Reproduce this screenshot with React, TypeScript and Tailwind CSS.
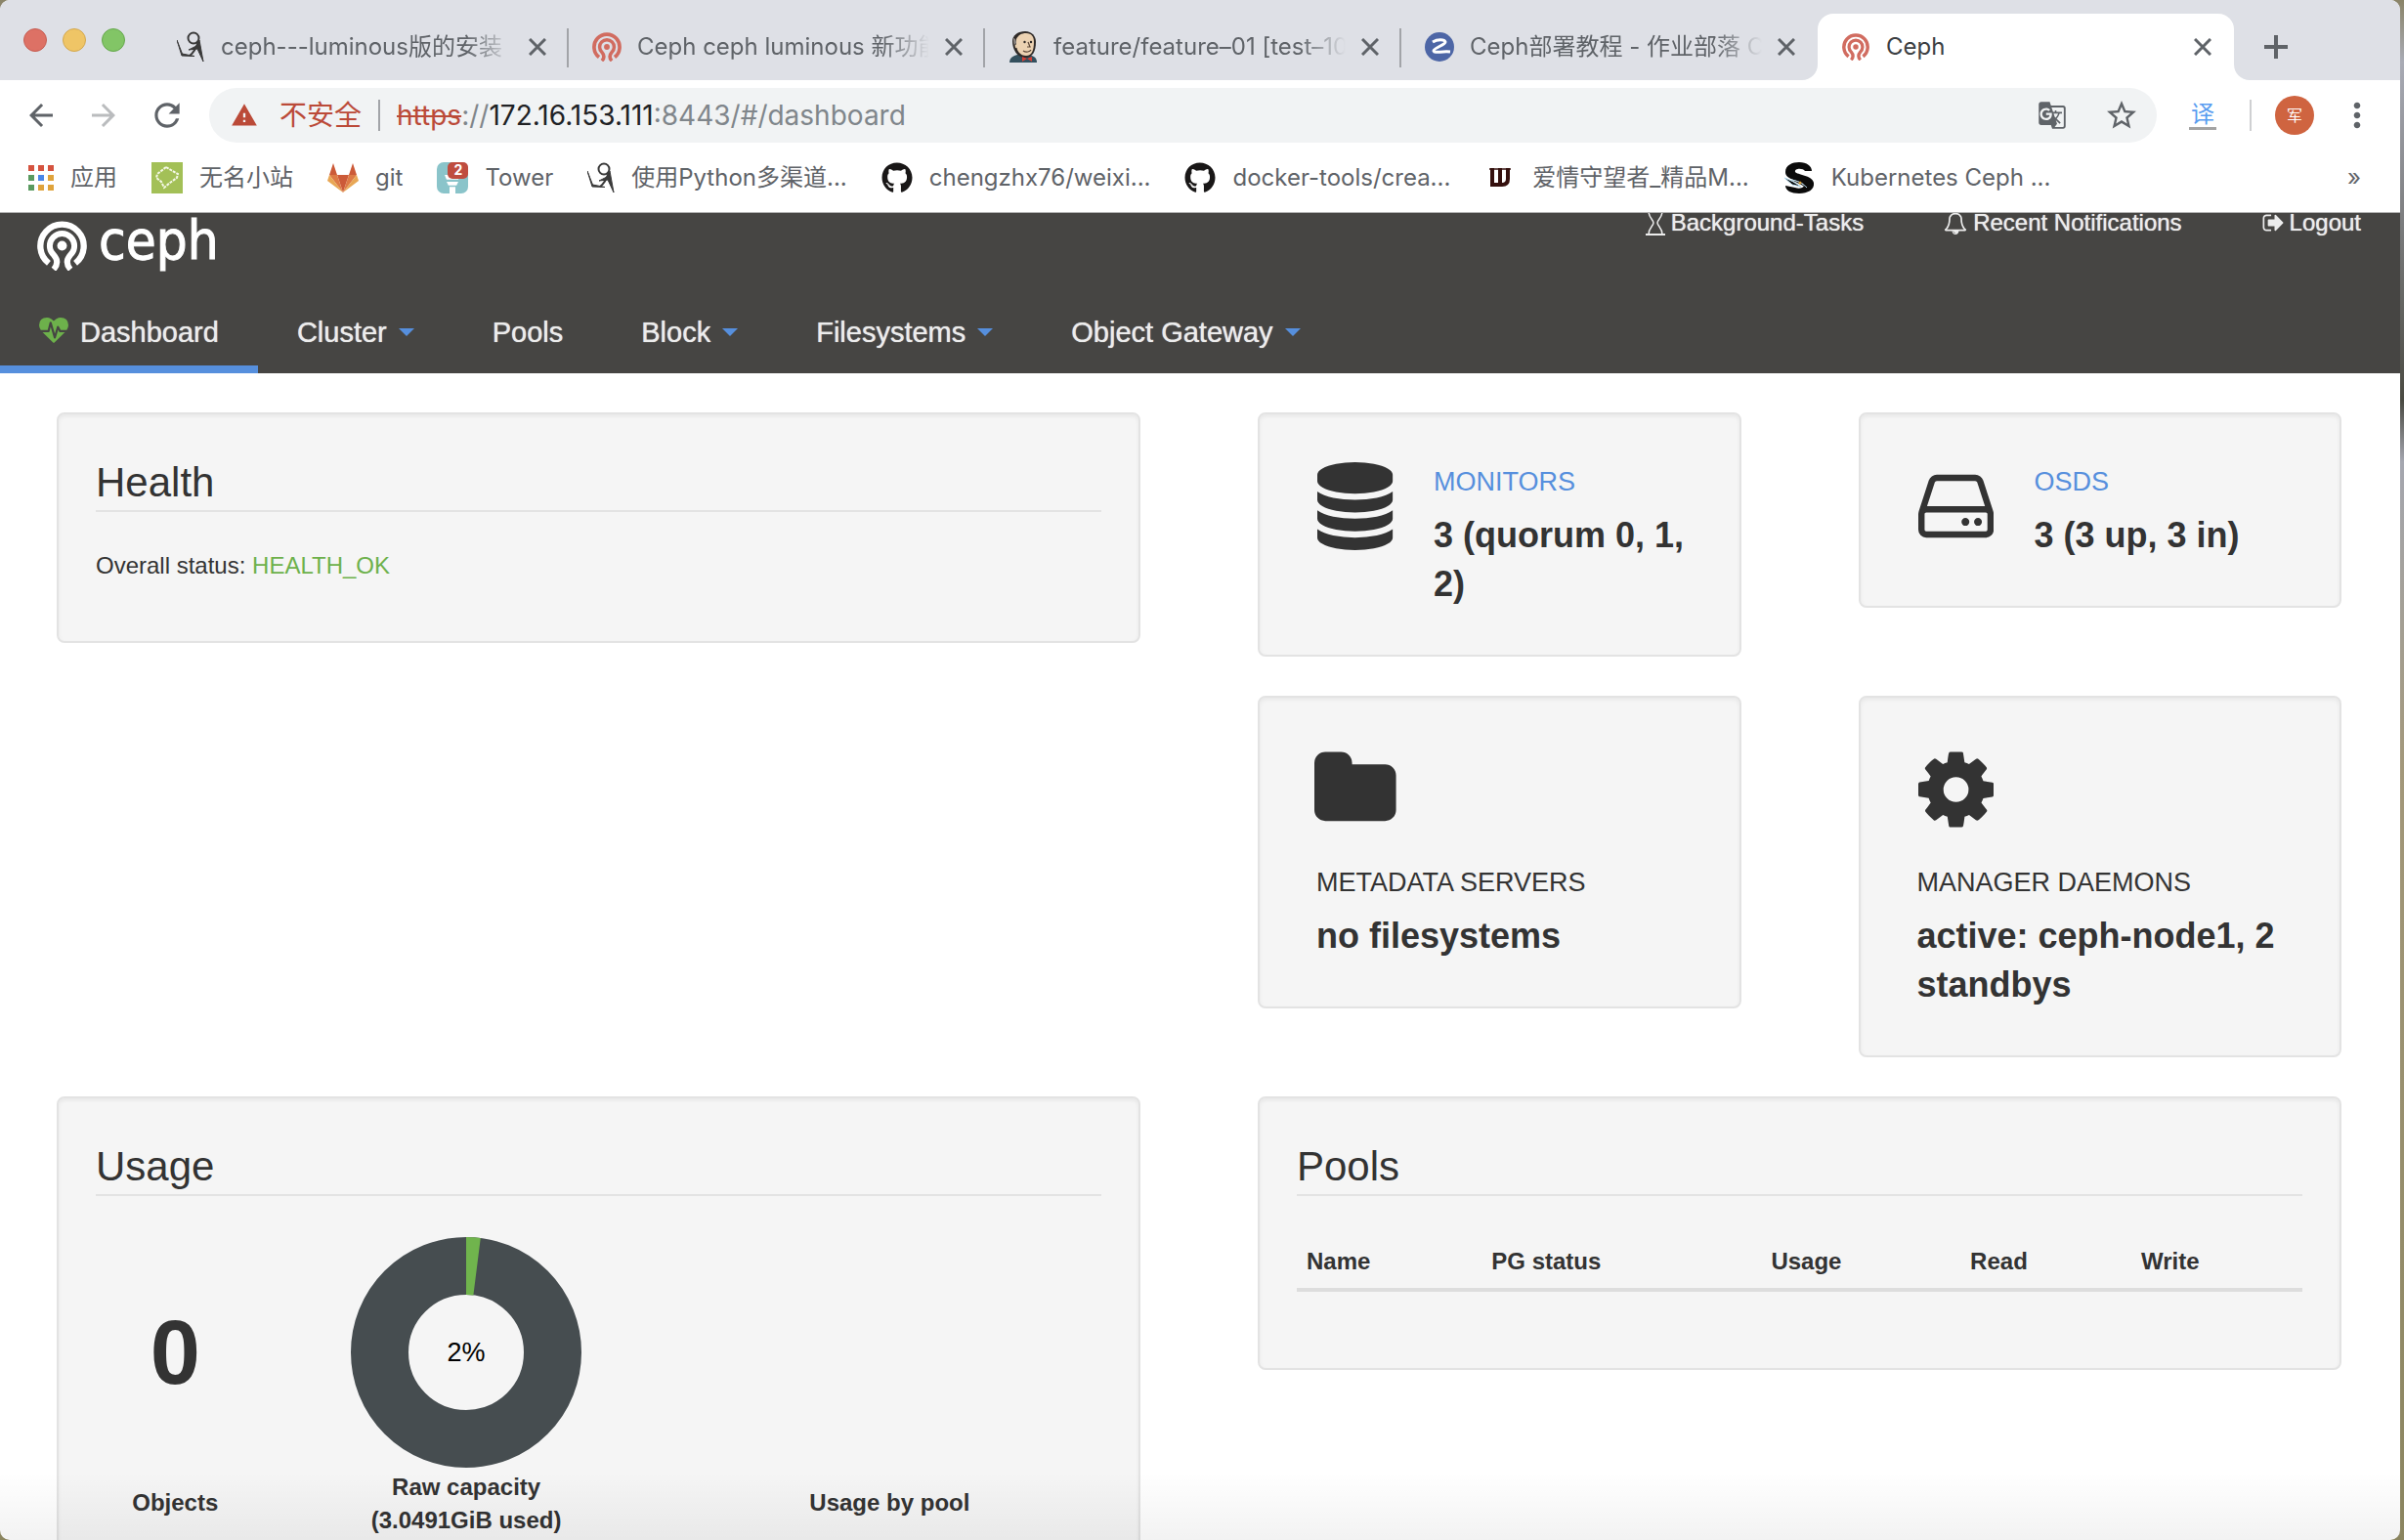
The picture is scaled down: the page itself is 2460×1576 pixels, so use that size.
import type { ReactNode } from "react";
import { FaGithub } from "react-icons/fa";
import {
  MdArrowBack,
  MdArrowForward,
  MdGTranslate,
  MdMoreVert,
  MdRefresh,
  MdStarBorder,
  MdWarning,
} from "react-icons/md";

/* ---------- Drawings ---------- */

function CephMark({ className }: { className: string }) {
  return (
    <svg viewBox="0 0 154 154" className={className} fill="none" stroke="currentColor" aria-hidden="true">
      <path d="M36 131A67 67 0 1 1 118 131" strokeWidth="19" />
      <path d="M51 150C64 136 64 120 51 105A38 38 0 1 1 103 105C90 120 90 136 103 150" strokeWidth="18" />
      <circle cx="77" cy="77" r="15" fill="currentColor" stroke="none" />
    </svg>
  );
}

function ArcherIcon() {
  return (
    <svg viewBox="0 0 28 32" className="h-8 w-7" fill="none" stroke="#3a3a3a" aria-hidden="true">
      <circle cx="17" cy="7" r="5.5" strokeWidth="2" />
      <path d="M0 9L5 25L18 25.500L5.500 23Z" fill="#3a3a3a" strokeWidth="1" />
      <path d="M13 25C17 22 20 17 22 10" strokeWidth="2" />
      <path d="M23 9L27 31L21 18L12 19L20 15Z" fill="#3a3a3a" strokeWidth="1" />
    </svg>
  );
}

function JenkinsIcon() {
  return (
    <svg viewBox="0 0 30 32" className="h-8 w-8" aria-hidden="true">
      <path d="M1 32C1 27 5 25 9 24H20C26 25 29 27 29 32Z" fill="#34505e" />
      <path d="M4 10C4 4 10 0 17 0C24 0 28 5 28 11C28 20 25 27 17 27C9 27 4 19 4 10Z" fill="#2f2a28" />
      <path d="M8 8C10 4 13 2 18 2C24 2 26 6 26 11C26 19 24 25 18 25C12 25 8 20 8 14Z" fill="#ecd2b2" />
      <path d="M5 7C7 7 8 9 8 13V17C6 16 5 12 5 7Z" fill="#8d8783" />
      <path d="M8 13C5 13 6 18 9 18" fill="#ecd2b2" stroke="#2f2a28" strokeWidth="1" />
      <circle cx="16.500" cy="11" r="1.200" fill="#2f2a28" />
      <circle cx="23" cy="11" r="1.200" fill="#2f2a28" />
      <path d="M20 11L22 16H19M15 20C18 22 22 21 23 19" fill="none" stroke="#5b4636" strokeWidth="1.200" />
      <path d="M14 26L19 28L14 31ZM24 26L19 28L24 31Z" fill="#d43f35" />
    </svg>
  );
}

function ZIcon() {
  return (
    <svg viewBox="0 0 30 30" className="h-[30px] w-[30px]" aria-hidden="true">
      <circle cx="15" cy="15" r="15" fill="#4d66a6" />
      <path d="M8 10C13 7 20 7 21 10C21 13 9 16 9 19C10 22 17 19 26 20" fill="none" stroke="#fff" strokeWidth="3" />
    </svg>
  );
}

function AppsIcon() {
  const rows = [
    ["#d5533f", "#d5533f", "#d5533f"],
    ["#5a9a5f", "#4a86e8", "#dfa33c"],
    ["#5a9a5f", "#dfa33c", "#dfa33c"],
  ];
  return (
    <svg viewBox="0 0 26 26" className="h-[26px] w-[26px]" aria-hidden="true">
      {rows.map((row, y) =>
        row.map((fill, x) => <rect key={`${x}-${y}`} x={x * 10} y={y * 10} width="6" height="6" fill={fill} />),
      )}
    </svg>
  );
}

function GreenSiteIcon() {
  return (
    <svg viewBox="0 0 32 32" className="h-8 w-8" aria-hidden="true">
      <rect width="32" height="32" fill="#a3c057" />
      <path
        d="M15 5L20 8L27 12L26 16L19 21L13 26L10 20L5 16L6 12Z"
        fill="none"
        stroke="#f4f8e6"
        strokeWidth="2"
        strokeDasharray="3 1"
      />
    </svg>
  );
}

function GitlabIcon() {
  return (
    <svg viewBox="0 0 32 30" className="h-[30px] w-8" aria-hidden="true">
      <path d="M16 30L10 12H22Z" fill="#cc5a38" />
      <path d="M16 30L2 12H10ZM16 30L30 12H22Z" fill="#dd7a45" />
      <path d="M2 12L0 18L16 30ZM30 12L32 18L16 30Z" fill="#e8a755" />
      <path d="M2 12L6 0L10 12ZM30 12L26 0L22 12Z" fill="#cc5a38" />
    </svg>
  );
}

function TowerIcon() {
  return (
    <span className="relative block h-8 w-8">
      <svg viewBox="0 0 32 32" className="h-8 w-8" aria-hidden="true">
        <rect width="32" height="32" rx="7" fill="#8ac4ca" />
        <path d="M8 13H24L22 18H10ZM10 20H22L20 24H12ZM13 24H19V32H13Z" fill="#fff" />
        <path d="M9 18.500H23M12 24.500H20" stroke="#8ac4ca" strokeWidth="1.500" />
      </svg>
      <span className="absolute right-0 top-0 flex h-[17px] w-[21px] items-center justify-center rounded-[5px] bg-[#bf4d40] text-[14px] font-bold leading-none text-white">
        2
      </span>
    </span>
  );
}

function WIcon() {
  return (
    <svg viewBox="0 0 32 32" className="h-8 w-8" fill="none" stroke="#35100e" aria-hidden="true">
      <path d="M8 6V23H18Q24 23 24 17V6" strokeWidth="4" />
      <path d="M16 6V23" strokeWidth="4" />
      <path d="M5 7H27" strokeWidth="1.500" />
    </svg>
  );
}

function SIcon() {
  return (
    <svg viewBox="0 0 32 32" className="h-8 w-8" aria-hidden="true">
      <path
        d="M29 9H22C20 6 11 6 12 10C14 13 29 13 31 21C32 28 25 32 16 32C8 32 2 29 2 24L12 26C18 28 23 25 20 22C15 18 2 18 2 10C2 3 9 0 16 0C24 0 29 4 29 9Z"
        fill="#0b0b0b"
      />
      <path d="M1 16C7 18 12 21 18 25L9 23ZM8 18C14 19 19 21 24 26" fill="#0b0b0b" stroke="#b8dcee" strokeWidth="1" />
      <circle cx="17" cy="21" r="1.500" fill="#d9a441" />
    </svg>
  );
}

/* Font icons drawn on a 1792-unit em */
const glyphs = {
  database: {
    box: "0 0 1536 1792",
    d: "M768 768q237 0 443-43t325-127v170q0 69-103 128t-280 93.5-385 34.5-385-34.5-280-93.5-103-128v-170q119 84 325 127t443 43zm0 768q237 0 443-43t325-127v170q0 69-103 128t-280 93.5-385 34.5-385-34.5-280-93.5-103-128v-170q119 84 325 127t443 43zm0-384q237 0 443-43t325-127v170q0 69-103 128t-280 93.5-385 34.5-385-34.5-280-93.5-103-128v-170q119 84 325 127t443 43zm0-1152q208 0 385 34.5t280 93.5 103 128v128q0 69-103 128t-280 93.5-385 34.5-385-34.5-280-93.5-103-128v-128q0-69 103-128t280-93.5 385-34.5z",
  },
  disk: {
    box: "0 0 1536 1792",
    d: "M1040 1216q0 33-23.5 56.5t-56.5 23.5-56.5-23.5-23.5-56.5 23.5-56.5 56.5-23.5 56.5 23.5 23.5 56.5zm256 0q0 33-23.5 56.5t-56.5 23.5-56.5-23.5-23.5-56.5 23.5-56.5 56.5-23.5 56.5 23.5 23.5 56.5zm112 160v-320q0-13-9.5-22.5t-22.5-9.5h-1216q-13 0-22.5 9.5t-9.5 22.5v320q0 13 9.5 22.5t22.5 9.5h1216q13 0 22.5-9.5t9.5-22.5zm-1230-480h1180l-157-482q-4-13-16-21.5t-26-8.5h-782q-14 0-26 8.5t-16 21.5zm1358 160v320q0 66-47 113t-113 47h-1216q-66 0-113-47t-47-113v-320q0-25 16-75l197-606q17-53 63-86t101-33h782q55 0 101 33t63 86l197 606q16 50 16 75z",
  },
  folder: {
    box: "0 0 1664 1792",
    d: "M1664 608v704q0 92-66 158t-158 66h-1216q-92 0-158-66t-66-158v-960q0-92 66-158t158-66h320q92 0 158 66t66 158v32h672q92 0 158 66t66 158z",
  },
  cog: {
    box: "0 0 1536 1792",
    d: "M1024 896q0-106-75-181t-181-75-181 75-75 181 75 181 181 75 181-75 75-181zm512-109v222q0 12-8 23t-20 13l-185 28q-19 54-39 91 35 50 107 138 10 12 10 25t-9 23q-27 37-99 108t-94 71q-12 0-26-9l-138-108q-44 23-91 38-16 136-29 186-7 28-36 28h-222q-14 0-24.5-8.5t-11.5-21.5l-28-184q-49-16-90-37l-141 107q-10 9-25 9-14 0-25-11-126-114-165-168-7-10-7-23 0-12 8-23 15-21 51-66.5t54-70.5q-27-50-41-99l-183-27q-13-2-21-12.5t-8-23.5v-222q0-12 8-23t19-13l186-28q14-46 39-92-40-57-107-138-10-12-10-24 0-10 9-23 26-36 98.5-107.5t94.5-71.5q13 0 26 10l138 107q44-23 91-38 16-136 29-186 7-28 36-28h222q14 0 24.5 8.5t11.5 21.5l28 184q49 16 90 37l142-107q9-9 24-9 13 0 25 10 129 119 165 170 7 8 7 22 0 12-8 23-15 21-51 66.5t-54 70.5q26 50 41 98l183 28q13 2 21 12.5t8 23.5z",
  },
  heartbeat: {
    box: "0 0 1792 1792",
    d: "M1280 896h305q-5 6-10 10.5t-9 7.5l-3 4-623 600q-18 18-44 18t-44-18l-624-602q-5-2-21-20h369q22 0 39.5-13.5t22.5-34.5l70-281 190 667q6 20 23 33t39 13q21 0 38-13t23-33l146-485 56 112q18 35 57 35zm512-428q0 145-103 300h-369l-111-221q-8-17-25.5-27t-36.5-8q-45 5-56 46l-129 430-196-686q-6-20-23.5-33t-39.5-13-39 13.5-22 34.5l-116 464h-423q-103-155-103-300 0-220 127-344t351-124q62 0 126.5 21.5t120 58 95.5 68.5 76 68q36-36 76-68t95.5-68.5 120-58 126.5-21.5q224 0 351 124t127 344z",
  },
  bell: {
    box: "0 0 1792 1792",
    d: "M912 1696q0-16-16-16-59 0-101.5-42.5t-42.5-101.5q0-16-16-16t-16 16q0 73 51.5 124.5t124.5 51.5q16 0 16-16zm-666-288h1300q-266-300-266-832 0-51-24-105t-69-103-121.5-80.5-169.5-31.5-169.5 31.5-121.5 80.5-69 103-24 105q0 532-266 832zm1482 0q0 52-38 90t-90 38h-448q0 106-75 181t-181 75-181-75-75-181h-448q-52 0-90-38t-38-90q50-42 91-88t85-119.5 74.5-158.5 50-206 19.5-260q0-152 117-282.5t307-158.5q-8-19-8-39 0-40 28-68t68-28 68 28 28 68q0 20-8 39 190 28 307 158.5t117 282.5q0 139 19.5 260t50 206 74.5 158.5 85 119.5 91 88z",
  },
  logout: {
    box: "0 0 1568 1792",
    d: "M640 1440q0 4 1 20t.5 26.5-3 23.5-10 19.5-20.5 6.5h-320q-119 0-203.5-84.5t-84.5-203.5v-704q0-119 84.5-203.5t203.5-84.5h320q13 0 22.5 9.5t9.5 22.5q0 4 1 20t.5 26.5-3 23.5-10 19.5-20.5 6.5h-320q-66 0-113 47t-47 113v704q0 66 47 113t113 47h312l11.5 1 11.5 3 8 5.5 7 9 2 13.5zm928-544q0 26-19 45l-544 544q-19 19-45 19t-45-19-19-45v-288h-448q-26 0-45-19t-19-45v-384q0-26 19-45t45-19h448v-288q0-26 19-45t45-19 45 19l544 544q19 19 19 45z",
  },
};

function Glyph({ name, className }: { name: keyof typeof glyphs; className: string }) {
  return (
    <svg viewBox={glyphs[name].box} className={className} fill="currentColor" aria-hidden="true">
      <path d={glyphs[name].d} />
    </svg>
  );
}

function HourglassIcon() {
  return (
    <svg viewBox="0 0 20 26" className="h-[26px] w-5" fill="none" stroke="currentColor" strokeWidth="2" aria-hidden="true">
      <path d="M0 1H20M0 25H20" />
      <path d="M3 1C3 8 8 10 8 13C8 16 3 18 3 25M17 1C17 8 12 10 12 13C12 16 17 18 17 25" strokeWidth="1.500" />
    </svg>
  );
}

function CloseIcon() {
  return (
    <svg viewBox="0 0 18 18" className="h-[18px] w-[18px]" stroke="#5f6368" strokeWidth="3" aria-hidden="true">
      <path d="M1 1L17 17M17 1L1 17" />
    </svg>
  );
}

function TabFoot({ side }: { side: "left" | "right" }) {
  return (
    <svg
      viewBox="0 0 16 16"
      className={side === "left" ? "absolute -left-4 bottom-0 h-4 w-4" : "absolute -right-4 bottom-0 h-4 w-4"}
      aria-hidden="true"
    >
      <path d={side === "left" ? "M16 0V16H0A16 16 0 0 0 16 0Z" : "M0 0V16H16A16 16 0 0 1 0 0Z"} fill="#fff" />
    </svg>
  );
}

/* ---------- Browser window ---------- */

function Tab({ icon, title, active = false, last = false }: { icon: ReactNode; title: string; active?: boolean; last?: boolean }) {
  return (
    <div
      className={
        active
          ? "relative flex h-[68px] w-[426px] shrink-0 items-center gap-4 rounded-t-2xl bg-white pl-6 pr-[23px]"
          : "relative flex h-[68px] w-[426px] shrink-0 items-center gap-4 pl-6 pr-[23px]"
      }
    >
      {active && <TabFoot side="left" />}
      {active && <TabFoot side="right" />}
      <button className="flex min-w-0 flex-1 items-center gap-4 text-left">
        <span className="flex w-[30px] shrink-0 justify-center text-[#d16c60]">{icon}</span>
        <span
          className={
            active
              ? "flex-1 overflow-hidden whitespace-nowrap text-[#3c4043]"
              : "flex-1 overflow-hidden whitespace-nowrap text-[#5f6368] [mask-image:linear-gradient(to_right,black_calc(100%-48px),transparent)]"
          }
        >
          {title}
        </span>
      </button>
      <button aria-label={`Close ${title}`}>
        <CloseIcon />
      </button>
      {!active && !last && <span className="absolute right-0 top-[15px] h-10 w-0.5 bg-[#a2a4a8]" />}
    </div>
  );
}

function TabStrip() {
  return (
    <div className="flex h-[82px] items-end bg-[#dee0e6] text-2xl">
      <div className="flex h-full w-[156px] shrink-0 items-center gap-4 pl-6">
        <button aria-label="Close window" className="h-6 w-6 rounded-full border border-[#c55d52] bg-[#dd7165]" />
        <button aria-label="Minimise window" className="h-6 w-6 rounded-full border border-[#d3a84f] bg-[#efc566]" />
        <button aria-label="Zoom window" className="h-6 w-6 rounded-full border border-[#66a84e] bg-[#82c566]" />
      </div>
      <Tab icon={<ArcherIcon />} title="ceph---luminous版的安装" />
      <Tab icon={<CephMark className="h-[30px] w-[30px]" />} title="Ceph ceph luminous 新功能" />
      <Tab icon={<JenkinsIcon />} title="feature/feature–01 [test–10" />
      <Tab icon={<ZIcon />} title="Ceph部署教程 - 作业部落 C" last />
      <Tab icon={<CephMark className="h-7 w-7" />} title="Ceph" active />
      <button aria-label="New tab" className="flex h-[68px] w-[86px] items-center justify-center">
        <svg viewBox="0 0 24 24" className="h-6 w-6" stroke="#5f6368" strokeWidth="4" aria-hidden="true">
          <path d="M12 0V24M0 12H24" />
        </svg>
      </button>
    </div>
  );
}

function Toolbar() {
  return (
    <div className="flex h-[72px] items-center px-6 text-[28px] text-[#5f6368]">
      <button aria-label="Back" className="mr-7">
        <MdArrowBack className="h-9 w-9" />
      </button>
      <button aria-label="Forward" className="mr-7 text-[#babcbe]">
        <MdArrowForward className="h-9 w-9" />
      </button>
      <button aria-label="Reload" className="mr-6">
        <MdRefresh className="h-[38px] w-[38px]" />
      </button>
      <div className="flex h-14 flex-1 items-center rounded-full bg-[#f1f3f4] pl-[22px] pr-[18px]">
        <MdWarning className="mr-[22px] h-7 w-7 shrink-0 text-[#bb4a38]" />
        <span className="text-[#bb4a38]">不安全</span>
        <span className="mx-[17px] h-8 w-0.5 shrink-0 bg-[#a2a4a8]" />
        <div role="textbox" aria-label="Address" tabIndex={0} className="flex-1 whitespace-nowrap text-[#80868b]">
          <span className="text-[#bb4a38] line-through">https</span>://<span className="text-[#202124]">172.16.153.111</span>
          :8443/#/dashboard
        </div>
        <button aria-label="Translate this page" className="mr-[38px]">
          <MdGTranslate className="h-[30px] w-[30px]" />
        </button>
        <button aria-label="Bookmark this page">
          <MdStarBorder className="h-9 w-9" />
        </button>
      </div>
      <button className="ml-[33px] border-b-[3px] border-[#a3a3a3] px-0.5 text-2xl leading-[26px] text-[#599cf0]">译</button>
      <span className="ml-[34px] mr-6 h-8 w-0.5 bg-[#cfd0d2]" />
      <button className="h-10 w-10 rounded-full bg-[#cf6440] text-base text-white">军</button>
      <button aria-label="Menu" className="ml-6">
        <MdMoreVert className="h-10 w-10" />
      </button>
    </div>
  );
}

const bookmarks: { icon: ReactNode; label: string }[] = [
  { icon: <AppsIcon />, label: "应用" },
  { icon: <GreenSiteIcon />, label: "无名小站" },
  { icon: <GitlabIcon />, label: "git" },
  { icon: <TowerIcon />, label: "Tower" },
  { icon: <ArcherIcon />, label: "使用Python多渠道..." },
  { icon: <FaGithub className="h-8 w-8 text-[#191717]" />, label: "chengzhx76/weixi..." },
  { icon: <FaGithub className="h-8 w-8 text-[#191717]" />, label: "docker-tools/crea..." },
  { icon: <WIcon />, label: "爱情守望者_精品M..." },
  { icon: <SIcon />, label: "Kubernetes Ceph ..." },
];

function BookmarkBar() {
  return (
    <nav className="flex h-16 items-center gap-[35px] border-b border-[#b0b0b0] pb-2 pl-[29px] pr-10 text-2xl text-[#5f6368]">
      {bookmarks.map((b) => (
        <a key={b.label} href="#" className="flex shrink-0 items-center gap-[17px]">
          {b.icon}
          <span>{b.label}</span>
        </a>
      ))}
      <button className="ml-auto" aria-label="More bookmarks">
        »
      </button>
    </nav>
  );
}

/* ---------- Ceph dashboard ---------- */

const menu = [
  { label: "Dashboard", caret: false, active: true },
  { label: "Cluster", caret: true, active: false },
  { label: "Pools", caret: false, active: false },
  { label: "Block", caret: true, active: false },
  { label: "Filesystems", caret: true, active: false },
  { label: "Object Gateway", caret: true, active: false },
];

function DashboardHeader() {
  return (
    <header className="overflow-hidden bg-[#464543] text-[#ececec]">
      <div className="flex h-[84px] items-start justify-between pl-[38px] pr-10">
        <a href="#" className="flex items-start gap-3 pt-2 text-white">
          <CephMark className="h-[51px] w-[51px]" />
          <span className="font-['DejaVu_Sans_Condensed','DejaVu_Sans',sans-serif] text-[56px] leading-10 [-webkit-text-stroke:1px_white]">
            ceph
          </span>
        </a>
        <div className="-mt-[7px] flex gap-[82px] text-2xl leading-[34px] [text-shadow:0_0_1px_#ececec]">
          <a href="#" className="flex items-center gap-1.5">
            <HourglassIcon />
            Background-Tasks
          </a>
          <a href="#" className="flex items-center gap-1.5">
            <Glyph name="bell" className="h-6 w-6" />
            Recent Notifications
          </a>
          <a href="#" className="flex items-center gap-1.5">
            <Glyph name="logout" className="h-6 w-[22px]" />
            Logout
          </a>
        </div>
      </div>
      <nav className="flex text-[29px] leading-10 [text-shadow:0_0_1px_#ececec]">
        {menu.map((m) => (
          <a
            key={m.label}
            href="#"
            className={
              m.active
                ? "flex items-center gap-3 border-b-8 border-[#568fdd] px-10 pb-3.5 pt-[18px]"
                : "flex items-center gap-3 border-b-8 border-transparent px-10 pb-3.5 pt-[18px]"
            }
          >
            {m.active && <Glyph name="heartbeat" className="h-[30px] w-[30px] text-[#6db14b]" />}
            {m.label}
            {m.caret && (
              <svg viewBox="0 0 16 8" className="h-2 w-4" fill="#568fdd" aria-hidden="true">
                <path d="M0 0H16L8 8Z" />
              </svg>
            )}
          </a>
        ))}
      </nav>
    </header>
  );
}

function Panel({ title, children }: { title: string; children: ReactNode }) {
  return (
    <section className="rounded-lg border-2 border-[#e3e3e3] bg-[#f5f5f5] px-[38px] pb-[60px] pt-[47px] shadow-[inset_0_2px_4px_rgba(0,0,0,0.06)]">
      <h2 className="border-b-2 border-[#e3e3e3] pb-[5px] text-[42px] leading-[46px]">{title}</h2>
      {children}
    </section>
  );
}

function StatCard({
  icon,
  label,
  value,
  link = false,
  stacked = false,
}: {
  icon: keyof typeof glyphs;
  label: string;
  value: string;
  link?: boolean;
  stacked?: boolean;
}) {
  return (
    <section
      className={
        stacked
          ? "flex flex-col gap-[30px] rounded-lg border-2 border-[#e3e3e3] bg-[#f5f5f5] pb-[47px] pl-[58px] pr-10 pt-[49px] shadow-[inset_0_2px_4px_rgba(0,0,0,0.06)]"
          : "flex items-start gap-10 rounded-lg border-2 border-[#e3e3e3] bg-[#f5f5f5] pb-[47px] pl-[58px] pr-9 pt-[49px] shadow-[inset_0_2px_4px_rgba(0,0,0,0.06)]"
      }
    >
      <div className="flex w-20 shrink-0 justify-center">
        <Glyph name={icon} className="h-[90px] w-auto max-w-none shrink-0" />
      </div>
      <div>
        <h3 className="text-[27px] leading-10">
          {link ? (
            <a href="#" className="text-[#568fdd]">
              {label}
            </a>
          ) : (
            label
          )}
        </h3>
        <p className="mt-2.5 text-4xl font-bold leading-[50px]">{value}</p>
      </div>
    </section>
  );
}

function Donut({ percent }: { percent: number }) {
  const angle = (percent / 100) * 2 * Math.PI;
  const x = Math.sin(angle);
  const y = -Math.cos(angle);
  const wedge = `M0 -118A118 118 0 0 1 ${118 * x} ${118 * y}L${59 * x} ${59 * y}A59 59 0 0 0 0 -59Z`;
  return (
    <div className="relative h-[236px] w-[236px]">
      <svg viewBox="-118 -118 236 236" className="h-full w-full" aria-hidden="true">
        <circle r="88.500" fill="none" stroke="#464d50" strokeWidth="59" />
        <path d={wedge} fill="#70b44d" />
      </svg>
      <span className="absolute inset-0 flex items-center justify-center text-[27px] text-black">{percent}%</span>
    </div>
  );
}

function UsagePanel() {
  return (
    <Panel title="Usage">
      <div className="mt-[42px] grid grid-cols-[3fr_8fr_8fr] items-center text-center">
        <p className="text-[92px] font-bold leading-none">0</p>
        <div className="flex justify-center">
          <Donut percent={2} />
        </div>
        <div />
        <p className="text-2xl font-bold leading-[34px]">Objects</p>
        <p className="pt-[3px] text-2xl font-bold leading-[34px]">
          Raw capacity
          <br />
          (3.0491GiB used)
        </p>
        <p className="text-2xl font-bold leading-[34px]">Usage by pool</p>
      </div>
    </Panel>
  );
}

function PoolsPanel() {
  return (
    <Panel title="Pools">
      <table className="mb-[18px] mt-10 w-full table-fixed text-left text-2xl leading-[34px]">
        <thead>
          <tr className="border-b-4 border-[#ddd]">
            <th className="w-[18.4%] p-2.5">Name</th>
            <th className="w-[27.8%] p-2.5">PG status</th>
            <th className="w-[19.8%] p-2.5">Usage</th>
            <th className="w-[17%] p-2.5">Read</th>
            <th className="w-[17%] p-2.5">Write</th>
          </tr>
        </thead>
        <tbody />
      </table>
    </Panel>
  );
}

export default function App() {
  return (
    <div className="h-screen overflow-hidden bg-[linear-gradient(to_bottom,#8a8468,#a9abb5_4%,#4a4a42_26%,#a5a7b0_30%,#a3987a_50%,#8b855f)] pr-1">
      <div className="relative flex h-full flex-col overflow-hidden rounded-[10px] bg-white font-['Inter','Noto_Sans_CJK_SC',sans-serif]">
        <TabStrip />
        <Toolbar />
        <BookmarkBar />
        <div className="flex-1 overflow-hidden font-['Liberation_Sans',Arial,sans-serif] text-[#333]">
          <DashboardHeader />
          <main className="grid grid-cols-2 items-start gap-x-[120px] gap-y-10 pl-[58px] pr-[60px] pt-10">
            <Panel title="Health">
              <p className="mt-[38px] text-2xl leading-[34px]">
                Overall status: <span className="text-[#6db14b]">HEALTH_OK</span>
              </p>
            </Panel>
            <div className="grid grid-cols-2 items-start gap-x-[120px] gap-y-10">
              <StatCard icon="database" label="MONITORS" value="3 (quorum 0, 1, 2)" link />
              <StatCard icon="disk" label="OSDS" value="3 (3 up, 3 in)" link />
              <StatCard icon="folder" label="METADATA SERVERS" value="no filesystems" stacked />
              <StatCard icon="cog" label="MANAGER DAEMONS" value="active: ceph-node1, 2 standbys" stacked />
            </div>
            <UsagePanel />
            <PoolsPanel />
          </main>
        </div>
        <div className="pointer-events-none absolute inset-x-0 bottom-0 h-[70px] bg-linear-to-b from-transparent to-black/5" />
      </div>
    </div>
  );
}
